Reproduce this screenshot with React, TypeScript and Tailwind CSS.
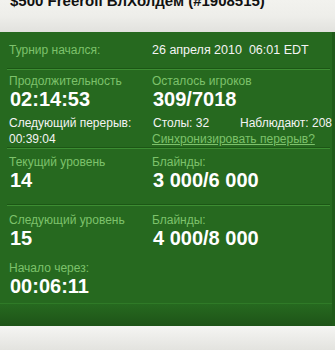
import React from "react";

const Sep = () => (
  <div className="mx-[7px] mr-[2px] h-0 border-t border-b border-t-[#1c5615] border-b-[#3c8d32]" />
);

export default function App() {
  const font = { fontFamily: '"Liberation Sans", Arial, sans-serif' };
  return (
    <div className="w-[335px] h-[350px] overflow-hidden bg-[#e8e8e4]" style={font}>
      <div className="h-[32px] bg-gradient-to-b from-[#f2f2ee] via-[#eeeeea] to-[#e2e2de] overflow-hidden">
        <div className="pl-[10px] -mt-[8px] text-[15px] leading-[17px] font-bold text-[#111] whitespace-nowrap">
          $500 Freeroll ВлХолдем (#1908515)
        </div>
      </div>
      <div className="h-[294px] bg-[#26691f] border-r-[3px] border-r-[#1f5a19] flex flex-col text-[12px] leading-[14px]">
        <div className="pt-[11px] pb-[11px] flex">
          <div className="pl-[9px] w-[152px] shrink-0 text-[#7dc26b]">Турнир начался:</div>
          <div className="text-[#f4f4f4] text-[12.5px] whitespace-nowrap">26 апреля 2010&nbsp; 06:01 EDT</div>
        </div>
        <Sep />
        <div className="pt-[4px] pb-[1px] flex">
          <div className="w-[152px] shrink-0 pl-[9px]">
            <div className="text-[#7dc26b]">Продолжительность</div>
            <div className="text-white font-bold text-[20px] leading-[22px] pl-px">02:14:53</div>
            <div className="mt-[6px] text-[#f4f4f4] whitespace-nowrap">Следующий перерыв:</div>
            <div className="mt-[2px] text-[#f4f4f4]">00:39:04</div>
          </div>
          <div className="flex-1 min-w-0 whitespace-nowrap">
            <div className="text-[#7dc26b]">Осталось игроков</div>
            <div className="text-white font-bold text-[20px] leading-[22px] pl-px">309/7018</div>
            <div className="mt-[6px] flex text-[#f4f4f4]">
              <div className="w-[88px] shrink-0 pl-px">Столы: 32</div>
              <div>Наблюдают: 208</div>
            </div>
            <div className="mt-[2px] text-[#7dc26b] underline">Синхронизировать перерыв?</div>
          </div>
        </div>
        <Sep />
        <div className="pt-[6px] pb-[13px] flex">
          <div className="w-[152px] shrink-0 pl-[9px]">
            <div className="text-[#7dc26b]">Текущий уровень</div>
            <div className="text-white font-bold text-[20px] leading-[22px] pl-px">14</div>
          </div>
          <div className="flex-1">
            <div className="text-[#7dc26b]">Блайнды:</div>
            <div className="text-white font-bold text-[20px] leading-[22px] pl-px">3 000/6 000</div>
          </div>
        </div>
        <Sep />
        <div className="pt-[7px] flex">
          <div className="w-[152px] shrink-0 pl-[9px]">
            <div className="text-[#7dc26b]">Следующий уровень</div>
            <div className="text-white font-bold text-[20px] leading-[22px] pl-px">15</div>
          </div>
          <div className="flex-1">
            <div className="text-[#7dc26b]">Блайнды:</div>
            <div className="text-white font-bold text-[20px] leading-[22px] pl-px">4 000/8 000</div>
          </div>
        </div>
        <div className="pt-[12px] pl-[9px]">
          <div className="text-[#7dc26b]">Начало через:</div>
          <div className="text-white font-bold text-[20px] leading-[22px] pl-px">00:06:11</div>
        </div>
        <div className="mt-auto h-[23px] border-t border-t-[#2f7a27] bg-gradient-to-b from-[#26691f] to-[#1e5418]" />
      </div>
      <div className="h-[24px] bg-gradient-to-b from-[#f5f5f3] to-[#e3e3df]" />
    </div>
  );
}
